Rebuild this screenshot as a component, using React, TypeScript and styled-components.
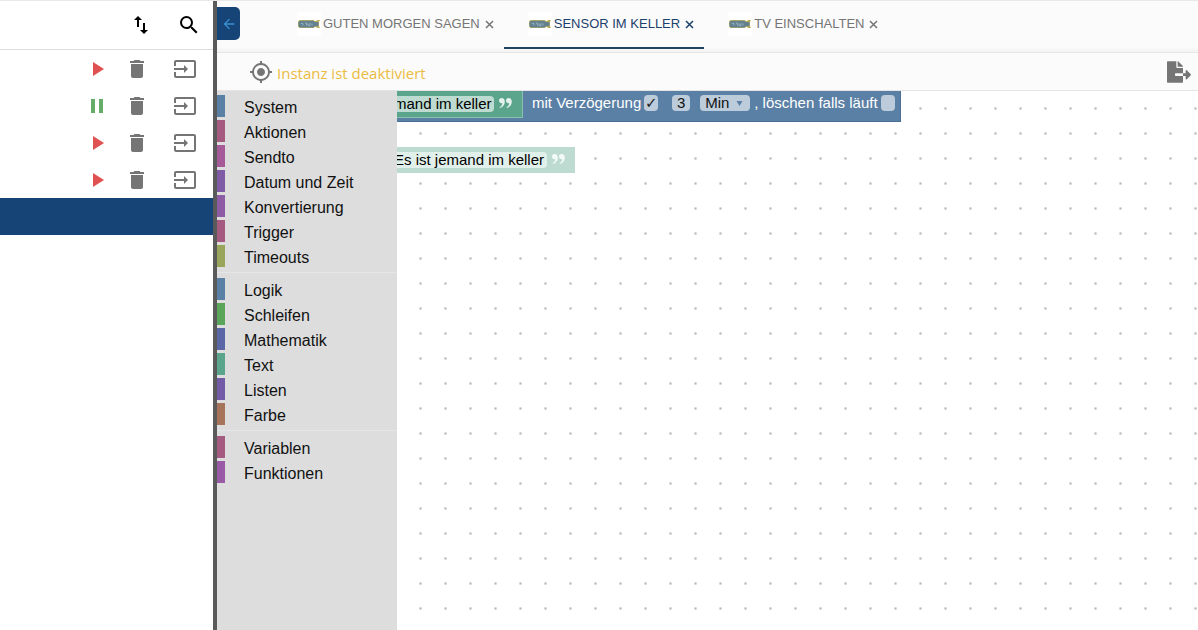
import React from "react";
import styled, { createGlobalStyle } from "styled-components";
import {
  MdArrowBack,
  MdDelete,
  MdGpsFixed,
  MdImportExport,
  MdInput,
  MdPause,
  MdPlayArrow,
  MdSearch,
} from "react-icons/md";
import { FaFileExport } from "react-icons/fa";

const GlobalStyle = createGlobalStyle`
  * { box-sizing: border-box; }
  html, body { margin: 0; }
  body {
    font-family: "Liberation Sans", Arial, sans-serif;
    background: #fff;
    color: #111;
  }
  button, input, select { font: inherit; color: inherit; }
`;

const Page = styled.div`
  display: flex;
  min-height: 100vh;
  border-top: 1px solid #e9e9e9;
`;

const Sidebar = styled.aside`
  flex: none;
  width: 217px;
  border-right: 4px solid #5a5a5a;
`;

const SidebarHeader = styled.header`
  display: flex;
  align-items: center;
  justify-content: flex-end;
  gap: 24px;
  height: 49px;
  padding-right: 12px;
  border-bottom: 1px solid #dcdcdc;
`;

const IconButton = styled.button<{ $color?: string }>`
  display: flex;
  flex: none;
  padding: 0;
  border: 0;
  background: none;
  cursor: pointer;
  color: ${(p) => p.$color ?? "#757575"};
`;

const ScriptList = styled.ul`
  list-style: none;
  margin: 0;
  padding: 0;
`;

const ScriptRow = styled.li<{ $selected?: boolean }>`
  display: flex;
  align-items: center;
  justify-content: flex-end;
  gap: 24px;
  height: 37px;
  padding-right: 16px;
  background: ${(p) => (p.$selected ? "#164477" : "transparent")};
`;

const RunButton = styled(IconButton)`
  margin-right: -8px;
`;

const Main = styled.main`
  display: flex;
  flex: 1;
  flex-direction: column;
  min-width: 0;
`;

const TabBar = styled.div`
  display: flex;
  align-items: flex-start;
  height: 52px;
  background: linear-gradient(#fbfbfb 90%, #f2f2f2);
  border-bottom: 1px solid #e6e6e6;
`;

const BackButton = styled(IconButton)`
  align-items: center;
  justify-content: center;
  width: 23px;
  height: 33px;
  margin: 6px 33px 0 0;
  border-radius: 0 5px 5px 0;
  background: #164477;
  color: #3a90d4;
`;

const TabList = styled.div`
  display: flex;
`;

const Tab = styled.div<{ $active?: boolean }>`
  display: flex;
  align-items: center;
  gap: 1px;
  height: 48px;
  min-width: 200px;
  padding: 0 6px 0 24px;
  border-bottom: 2px solid ${(p) => (p.$active ? "#21445f" : "transparent")};
  color: ${(p) => (p.$active ? "#1c416b" : "#757575")};
`;

const TabLabel = styled.button`
  display: flex;
  align-items: center;
  gap: 2px;
  padding: 0;
  border: 0;
  background: none;
  font-size: 13px;
  line-height: 24px;
  white-space: nowrap;
  cursor: pointer;
`;

const CloseButton = styled.button`
  display: flex;
  padding: 4px;
  border: 0;
  background: none;
  cursor: pointer;
`;

const Toolbar = styled.div`
  display: flex;
  align-items: center;
  gap: 4px;
  height: 38px;
  padding: 0 7px 0 32px;
  background: #fbfbfb;
  border-bottom: 1px solid #e4e4e4;
`;

const Notice = styled.span`
  flex: 1;
  padding-top: 2px;
  font-family: "Open Sans", sans-serif;
  font-size: 15px;
  line-height: 24px;
  color: #ebbb42;
`;

const Editor = styled.div`
  display: flex;
  flex: 1;
`;

const Toolbox = styled.nav`
  flex: none;
  width: 180px;
  padding-top: 4px;
  background: #ddd;
`;

const ToolboxGroup = styled.ul`
  list-style: none;
  margin: 0;
  padding: 0;
  &:not(:last-child) {
    margin-bottom: 5px;
    padding-bottom: 5px;
    border-bottom: 1px solid #e6e6e6;
  }
`;

const Category = styled.li<{ $color: string }>`
  display: flex;
  align-items: center;
  height: 22px;
  margin-top: 3px;
  border-left: 8px solid ${(p) => p.$color};
  &:first-child {
    margin-top: 0;
  }
`;

const CategoryLink = styled.a`
  flex: 1;
  padding: 4px 0 0 19px;
  font-size: 16px;
  line-height: 22px;
  color: #111;
  text-decoration: none;
`;

const Workspace = styled.section`
  position: relative;
  flex: 1;
  min-width: 0;
  overflow: hidden;
  background-color: #fff;
  background-image: radial-gradient(circle at center, #bdbdbd 0, #d4d4d4 1px, transparent 2px);
  background-size: 25px 25px;
  background-position: 11px 5px;
`;

/* Blocks are scrolled slightly under the toolbox. */
const ActionBlock = styled.div`
  position: absolute;
  left: -3px;
  top: 0;
  display: flex;
  width: 507px;
  height: 31px;
  background: #5b80a5;
  border: solid #496f97;
  border-width: 0 1px 1px 0;
  color: #fff;
  font-size: 15px;
  line-height: 16px;
`;

const TextBlock = styled.div`
  display: flex;
  align-items: center;
  gap: 5px;
  flex: none;
  width: 129px;
  height: 27px;
  padding-bottom: 1px;
  background: #5ba58c;
  border: solid #8cc0ae;
  border-width: 0 1px 1px 0;
  font-size: 15px;
`;

const LooseTextBlock = styled(TextBlock)`
  position: absolute;
  left: -3px;
  top: 56px;
  width: 181px;
  height: 26px;
  background: #bddbd1;
  border: 0;
`;

const TextField = styled.input<{ $width: number; $pale?: boolean }>`
  width: ${(p) => p.$width}px;
  height: 16px;
  padding: 0;
  border: 0;
  border-radius: 0 4px 4px 0;
  background: ${(p) => (p.$pale ? "#e2f0eb" : "#bddbd1")};
  color: #000;
  line-height: 16px;
`;

const BlockFields = styled.div`
  display: flex;
  align-items: flex-start;
  padding: 4px 0 0 9px;
  white-space: nowrap;
`;

const CheckLabel = styled.label`
  display: flex;
  gap: 3px;
`;

const CheckBox = styled.input`
  appearance: none;
  width: 14px;
  height: 16px;
  margin: 0;
  border-radius: 4px;
  background: #bdccdb;
  color: #222;
  &:checked::after {
    content: "✓";
    display: block;
    font: 15px/16px "DejaVu Sans", sans-serif;
    text-align: center;
  }
`;

const NumberField = styled.input`
  width: 18px;
  height: 16px;
  margin: 0 10px 0 14px;
  padding: 0;
  border: 0;
  border-radius: 4px;
  background: #bdccdb;
  color: #111;
  text-align: center;
`;

const UnitPicker = styled.div`
  display: flex;
  align-items: center;
  width: 50px;
  height: 16px;
  margin-right: 4px;
  padding-right: 7px;
  border-radius: 4px;
  background: #bdccdb;
  color: #111;
`;

const UnitSelect = styled.select`
  flex: 1;
  appearance: none;
  min-width: 0;
  height: 16px;
  padding: 0 0 0 5px;
  border: 0;
  background: none;
`;

const CloseIcon = () => (
  <svg width="9" height="9" viewBox="0 0 9 9" aria-hidden="true">
    <path d="M1 1l7 7M8 1L1 8" stroke="currentColor" strokeWidth="1.5" fill="none" />
  </svg>
);

const QuoteIcon = ({ color }: { color: string }) => (
  <svg width="13" height="11" viewBox="0 0 13 11" aria-hidden="true">
    <g fill={color}>
      <path
        id="quote-mark"
        d="M0 2.600C0 1 1.100 0 2.700 0 4.600 0 5.800 1.500 5.800 3.800 5.800 6.600 4 9 1 10L.5 9.100C2.300 8.200 3.200 7 3.300 5.200 1.500 5.500 0 4.300 0 2.600z"
      />
      <path d="M7 2.600C7 1 8.100 0 9.700 0 11.600 0 12.800 1.500 12.800 3.800 12.800 6.600 11 9 8 10L7.500 9.100C9.300 8.200 10.200 7 10.300 5.200 8.500 5.500 7 4.300 7 2.600z" />
    </g>
  </svg>
);

const BlocklyLogo = () => (
  <svg width="24" height="24" viewBox="0 0 24 24" aria-hidden="true">
    <rect width="24" height="24" fill="#fff" />
    <path d="M2.500 8h14l1.500 1h1l1-1h3l-1 2v4l1 2h-3l-1-1h-1l-1.500 1h-14L1 14.500v-5z" fill="#beb35c" />
    <path d="M3 8.800h13.500l1.500 1.200h3.500v4.200H18l-1.500 1.200H3l-1.500-1.200v-4.200z" fill="#64818f" />
    <path d="M4 11.500h2v2M8 11h1.500v2.500M11 11.500v2h2v-2.500M15 11.500v2" stroke="#91afc0" fill="none" />
  </svg>
);

const tabs = [
  { name: "GUTEN MORGEN SAGEN" },
  { name: "SENSOR IM KELLER", active: true },
  { name: "TV EINSCHALTEN" },
];

const scripts = [{ running: false }, { running: true }, { running: false }, { running: false }];

const groups: [string, string][][] = [
  [
    ["System", "#5b80a5"],
    ["Aktionen", "#a55b80"],
    ["Sendto", "#a55b99"],
    ["Datum und Zeit", "#7f5ba5"],
    ["Konvertierung", "#8e5ba5"],
    ["Trigger", "#a55b80"],
    ["Timeouts", "#99a55b"],
  ],
  [
    ["Logik", "#5b80a5"],
    ["Schleifen", "#5ba55b"],
    ["Mathematik", "#5b67a5"],
    ["Text", "#5ba58c"],
    ["Listen", "#745ba5"],
    ["Farbe", "#a5745b"],
  ],
  [
    ["Variablen", "#a55b80"],
    ["Funktionen", "#995ba5"],
  ],
];

export default function App() {
  return (
    <>
      <GlobalStyle />
      <Page>
        <Sidebar>
          <SidebarHeader>
            <IconButton $color="#000" aria-label="Sortieren">
              <MdImportExport size={24} />
            </IconButton>
            <IconButton $color="#000" aria-label="Suchen">
              <MdSearch size={24} />
            </IconButton>
          </SidebarHeader>
          <ScriptList>
            {scripts.map((script, i) => (
              <ScriptRow key={i}>
                <RunButton
                  $color={script.running ? "#66ad6a" : "#e05252"}
                  aria-label={script.running ? "Pause" : "Start"}
                >
                  {script.running ? <MdPause size={24} /> : <MdPlayArrow size={24} />}
                </RunButton>
                <IconButton aria-label="Löschen">
                  <MdDelete size={24} />
                </IconButton>
                <IconButton aria-label="Öffnen">
                  <MdInput size={24} />
                </IconButton>
              </ScriptRow>
            ))}
            <ScriptRow $selected />
          </ScriptList>
        </Sidebar>

        <Main>
          <TabBar>
            <BackButton aria-label="Zurück">
              <MdArrowBack size={16} />
            </BackButton>
            <TabList>
              {tabs.map((tab) => (
                <Tab key={tab.name} $active={tab.active}>
                  <TabLabel>
                    <BlocklyLogo />
                    {tab.name}
                  </TabLabel>
                  <CloseButton aria-label="Schließen">
                    <CloseIcon />
                  </CloseButton>
                </Tab>
              ))}
            </TabList>
          </TabBar>

          <Toolbar>
            <IconButton aria-label="Block anzeigen">
              <MdGpsFixed size={24} />
            </IconButton>
            <Notice>Instanz ist deaktiviert</Notice>
            <IconButton aria-label="Exportieren">
              <FaFileExport size={24} />
            </IconButton>
          </Toolbar>

          <Editor>
            <Toolbox>
              {groups.map((group, i) => (
                <ToolboxGroup key={i}>
                  {group.map(([name, color]) => (
                    <Category key={name} $color={color}>
                      <CategoryLink href="#">{name}</CategoryLink>
                    </Category>
                  ))}
                </ToolboxGroup>
              ))}
            </Toolbox>

            <Workspace>
              <ActionBlock>
                <TextBlock>
                  <TextField $width={100} defaultValue="mand im keller" aria-label="Text" />
                  <QuoteIcon color="#e4f1ec" />
                </TextBlock>
                <BlockFields>
                  <CheckLabel>
                    mit Verzögerung
                    <CheckBox type="checkbox" defaultChecked />
                  </CheckLabel>
                  <NumberField defaultValue="3" aria-label="Verzögerung" />
                  <UnitPicker>
                    <UnitSelect aria-label="Einheit">
                      <option>Min</option>
                    </UnitSelect>
                    <svg width="7" height="5" viewBox="0 0 7 5" aria-hidden="true">
                      <path d="M0.500 0h6L3.500 5z" fill="#5b80a5" />
                    </svg>
                  </UnitPicker>
                  <CheckLabel>
                    , löschen falls läuft
                    <CheckBox type="checkbox" />
                  </CheckLabel>
                </BlockFields>
              </ActionBlock>
              <LooseTextBlock>
                <TextField $width={153} $pale defaultValue="Es ist jemand im keller" aria-label="Text" />
                <QuoteIcon color="#f4faf8" />
              </LooseTextBlock>
            </Workspace>
          </Editor>
        </Main>
      </Page>
    </>
  );
}
